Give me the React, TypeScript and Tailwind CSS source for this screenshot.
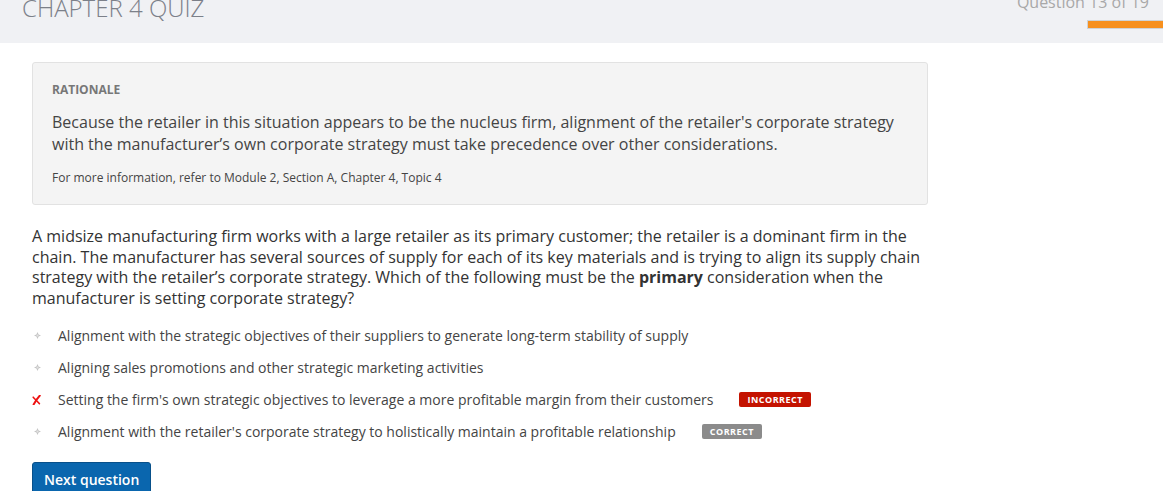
import React from "react";

type Option = {
  text: string;
  mark: "none" | "wrong";
  badge?: "incorrect" | "correct";
};

const OPTIONS: Option[] = [
  {
    text: "Alignment with the strategic objectives of their suppliers to generate long-term stability of supply",
    mark: "none",
  },
  { text: "Aligning sales promotions and other strategic marketing activities", mark: "none" },
  {
    text: "Setting the firm's own strategic objectives to leverage a more profitable margin from their customers",
    mark: "wrong",
    badge: "incorrect",
  },
  {
    text: "Alignment with the retailer's corporate strategy to holistically maintain a profitable relationship",
    mark: "none",
    badge: "correct",
  },
];

function Bullet() {
  return (
    <svg width="7" height="7" viewBox="0 0 7 7" className="ml-[2px]">
      <path d="M3.5 0 L4.6 2.4 L7 3.5 L4.6 4.6 L3.5 7 L2.4 4.6 L0 3.5 L2.4 2.4 Z" fill="#c4c4c4" />
      <circle cx="3.5" cy="3.5" r="1" fill="#e4e4e4" />
    </svg>
  );
}

function WrongMark() {
  return (
    <svg width="9" height="10" viewBox="0 0 9 10">
      <path d="M7.8 0.6 C6 2.6 3.8 5.6 1.6 9.4" stroke="#ee1111" strokeWidth="2" fill="none" strokeLinecap="round" />
      <path d="M1.2 2.2 C3 4 5.4 6.6 7.4 8.6" stroke="#ee1111" strokeWidth="1.6" fill="none" strokeLinecap="round" />
    </svg>
  );
}

export default function App() {
  return (
    <div className="min-h-screen bg-white font-['Open_Sans','Noto_Sans',sans-serif] overflow-hidden">
      {/* Header */}
      <header className="flex h-[43px] justify-between overflow-hidden bg-[#f0f1f4]">
        <h1 className="-mt-[4px] pl-[22px] text-[24px] leading-[24px] font-light text-[#7c8089]">CHAPTER 4 QUIZ</h1>
        <div className="flex flex-col items-end">
          <div className="-mt-[6px] pr-[14px] text-[16px] leading-[16px] text-[#a8a8a8]">Question 13 of 19</div>
          <div className="mt-[10px] h-[9px] w-[76px] border border-r-0 border-[#cfd3d6] bg-[#f7901e]" />
        </div>
      </header>

      <main className="px-[32px]">
        {/* Rationale */}
        <section className="mt-[19px] w-[896px] rounded-[3px] border border-[#e2e2e2] bg-[#f4f4f4] px-[19px] pt-[18px] pb-[17px]">
          <div className="text-[12px] leading-[18px] font-bold text-[#777777]">RATIONALE</div>
          <p className="mt-[12px] text-[16px] leading-[22px] text-[#444444]">
            Because the retailer in this situation appears to be the nucleus firm, alignment of the retailer's corporate
            strategy with the manufacturer’s own corporate strategy must take precedence over other considerations.
          </p>
          <p className="mt-[14px] text-[12px] leading-[18px] text-[#444444]">
            For more information, refer to Module 2, Section A, Chapter 4, Topic 4
          </p>
        </section>

        {/* Question */}
        <p className="mt-[21px] w-[896px] text-[16px] leading-[20.7px] text-[#333333]">
          A midsize manufacturing firm works with a large retailer as its primary customer; the retailer is a dominant
          firm in the chain. The manufacturer has several sources of supply for each of its key materials and is trying to
          align its supply chain strategy with the retailer’s corporate strategy. Which of the following must be the{" "}
          <strong className="font-bold">primary</strong> consideration when the manufacturer is setting corporate
          strategy?
        </p>

        {/* Options */}
        <ul className="mt-[11px]">
          {OPTIONS.map((o) => (
            <li key={o.text} className="flex h-[32px] items-center text-[14px] text-[#444444]">
              <span className="flex w-[26px] items-center">
                {o.mark === "wrong" ? <WrongMark /> : <Bullet />}
              </span>
              <span>{o.text}</span>
              {o.badge === "incorrect" && (
                <span className="ml-[26px] rounded-[2px] bg-[#c41300] px-[8px] text-[9px] leading-[15px] font-bold tracking-[0.5px] text-white">
                  INCORRECT
                </span>
              )}
              {o.badge === "correct" && (
                <span className="ml-[26px] rounded-[2px] bg-[#8b8b8b] px-[8px] text-[9px] leading-[15px] font-bold tracking-[0.5px] text-white">
                  CORRECT
                </span>
              )}
            </li>
          ))}
        </ul>

        <button className="mt-[14px] rounded-[3px] border border-[#08508a] bg-[#0a66ae] px-[11px] py-[7px] text-[14px] leading-[20px] font-semibold text-white">
          Next question
        </button>
      </main>
    </div>
  );
}
